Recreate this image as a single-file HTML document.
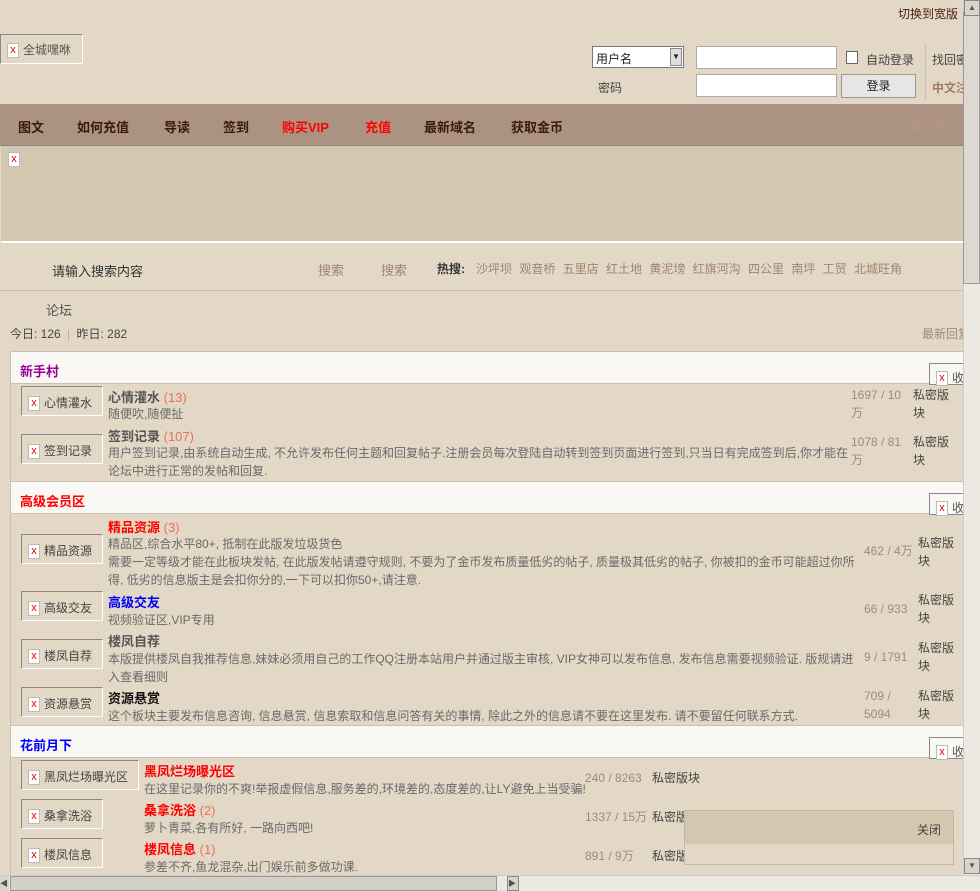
<!DOCTYPE html>
<html><head><meta charset="utf-8"><style>
*{margin:0;padding:0;box-sizing:border-box}
body{width:980px;height:891px;overflow:hidden;background:#e3d8c5;font-family:"Liberation Sans","Noto Sans CJK SC",sans-serif;font-size:12px;color:#555;position:relative}
.a{position:absolute;white-space:nowrap}
.x{display:inline-block;width:12px;height:15px;border:1px solid #bbb;background:#fff;color:#d00;font-size:11px;line-height:13px;text-align:center;vertical-align:middle;margin-right:4px}
.ib{position:absolute;height:30px;border:1px solid #888;border-right-color:#fff;border-bottom-color:#fff;padding:7px 0 0 6px;font-size:12px;color:#444;white-space:nowrap}
.sec{position:absolute;left:10px;width:955px;background:#faf8f4;border-top:1px solid #cbbfae;border-bottom:1px solid #cbbfae;height:33px}
.sec b{position:absolute;left:10px;top:9px;font-size:13px;font-weight:bold}
.t{font-size:13px;font-weight:bold}
.c{color:#e87060;font-weight:normal;font-size:13px}
.d{position:absolute;color:#6a6a6a;line-height:18px;white-space:normal}
.n{position:absolute;color:#a08a78;line-height:18px}
.p{position:absolute;color:#444;line-height:18px}
.nav{position:absolute;top:104px;left:0;width:980px;height:42px;background:#ab9281}
.nav span{position:absolute;top:13px;font-size:13px;font-weight:bold;color:#3a1a10}
.hot{color:#a08370}
</style></head><body>
<div class="a" style="right:22px;top:5px;color:#4a2010;font-size:12px">切换到宽版</div>
<div class="a" style="left:0;top:34px;width:83px;height:30px;border:1px solid #888;border-right-color:#fff;border-bottom-color:#fff;padding:6px 0 0 6px"><span class="x">x</span>全城嘿咻</div>
<div class="a" style="left:592px;top:46px;width:92px;height:22px;background:#fff;border:1px solid #777;padding:3px 3px;color:#222">用户名<span style="position:absolute;right:1px;top:1px;width:12px;height:18px;background:#ddd;border:1px solid #888;font-size:8px;text-align:center;line-height:16px">▼</span></div>
<div class="a" style="left:696px;top:46px;width:141px;height:23px;background:#fff;border:1px solid #aaa"></div>
<div class="a" style="left:846px;top:51px;width:12px;height:13px;background:#fff;border:1px solid #666"></div>
<div class="a" style="left:866px;top:51px;color:#444">自动登录</div>
<div class="a" style="left:925px;top:44px;height:56px;border-left:1px solid #cbbfae"></div>
<div class="a" style="left:932px;top:51px;color:#444">找回密</div>
<div class="a" style="left:598px;top:79px;color:#444">密码</div>
<div class="a" style="left:696px;top:74px;width:141px;height:23px;background:#fff;border:1px solid #aaa"></div>
<div class="a" style="left:841px;top:74px;width:75px;height:24px;background:#e6e6e4;border:1px solid #999;text-align:center;line-height:22px;color:#222">登录</div>
<div class="a" style="left:932px;top:79px;color:#a07a5a;font-weight:bold">中文注</div>
<div class="nav">
<span style="left:18px">图文</span><span style="left:77px">如何充值</span><span style="left:164px">导读</span><span style="left:223px">签到</span><span style="left:282px;color:#f00">购买VIP</span><span style="left:365px;color:#f00">充值</span><span style="left:424px">最新域名</span><span style="left:511px">获取金币</span><span style="left:898px;font-size:12px;color:#b39682">快捷导航</span>
</div>
<div class="a" style="left:1px;top:145px;width:963px;height:98px;background:#d4c7b0;border-top:1px solid #888;border-bottom:2px solid #fff;padding:6px 0 0 7px"><span class="x">x</span></div>
<div class="a" style="left:0;top:245px;width:964px;height:46px;border-bottom:1px solid #cbbfae"></div>
<div class="a" style="left:52px;top:261px;color:#333;font-size:13px">请输入搜索内容</div>
<div class="a hot" style="left:318px;top:260px;font-size:13px">搜索</div>
<div class="a hot" style="left:381px;top:260px;font-size:13px">搜索</div>
<div class="a" style="left:437px;top:260px;color:#333;font-weight:bold">热搜:</div>
<div class="a hot" style="left:476px;top:260px;word-spacing:4px">沙坪坝 观音桥 五里店 红土地 黄泥塝 红旗河沟 四公里 南坪 工贸 北城旺角</div>
<div class="a" style="left:46px;top:300px;font-size:13px;color:#555">论坛</div>
<div class="a" style="left:10px;top:325px;color:#444">今日: 126 <span style="color:#c9a98a;margin:0 3px">|</span> 昨日: 282</div>
<div class="a" style="left:922px;top:325px;color:#a08a78">最新回复</div>

<div class="sec" style="top:351px"><b style="color:#909">新手村</b></div>
<div class="a" style="left:929px;top:363px;width:36px;height:22px;border:1px solid #888;border-right:0;background:#faf8f4;padding:5px 0 0 6px"><span class="x">x</span>收</div>
<div class="ib" style="left:21px;top:386px;width:82px"><span class="x">x</span>心情灌水</div>
<div class="a t" style="left:108px;top:387px;color:#555">心情灌水 <span class="c">(13)</span></div>
<div class="d" style="left:108px;top:405px">随便吹,随便扯</div>
<div class="n" style="left:851px;top:386px">1697 / 10<br>万</div><div class="p" style="left:913px;top:386px">私密版<br>块</div>
<div class="ib" style="left:21px;top:434px;width:82px"><span class="x">x</span>签到记录</div>
<div class="a t" style="left:108px;top:426px;color:#555">签到记录 <span class="c">(107)</span></div>
<div class="d" style="left:108px;top:444px;width:745px">用户签到记录,由系统自动生成, 不允许发布任何主题和回复帖子.注册会员每次登陆自动转到签到页面进行签到,只当日有完成签到后,你才能在论坛中进行正常的发帖和回复.</div>
<div class="n" style="left:851px;top:433px">1078 / 81<br>万</div><div class="p" style="left:913px;top:433px">私密版<br>块</div>

<div class="sec" style="top:481px"><b style="color:#f00">高级会员区</b></div>
<div class="a" style="left:929px;top:493px;width:36px;height:22px;border:1px solid #888;border-right:0;background:#faf8f4;padding:5px 0 0 6px"><span class="x">x</span>收</div>
<div class="a t" style="left:108px;top:517px;color:#f00">精品资源 <span class="c">(3)</span></div>
<div class="ib" style="left:21px;top:534px;width:82px"><span class="x">x</span>精品资源</div>
<div class="d" style="left:108px;top:535px;width:750px">精品区,综合水平80+, 抵制在此版发垃圾货色<br>需要一定等级才能在此板块发帖, 在此版发帖请遵守规则, 不要为了金币发布质量低劣的帖子, 质量极其低劣的帖子, 你被扣的金币可能超过你所得, 低劣的信息版主是会扣你分的,一下可以扣你50+,请注意.</div>
<div class="n" style="left:864px;top:542px">462 / 4万</div><div class="p" style="left:918px;top:534px">私密版<br>块</div>
<div class="ib" style="left:21px;top:591px;width:82px"><span class="x">x</span>高级交友</div>
<div class="a t" style="left:108px;top:592px;color:#00f">高级交友</div>
<div class="d" style="left:108px;top:611px">视频验证区,VIP专用</div>
<div class="n" style="left:864px;top:600px">66 / 933</div><div class="p" style="left:918px;top:591px">私密版<br>块</div>
<div class="ib" style="left:21px;top:639px;width:82px"><span class="x">x</span>楼凤自荐</div>
<div class="a t" style="left:108px;top:631px;color:#555">楼凤自荐</div>
<div class="d" style="left:108px;top:650px;width:750px">本版提供楼凤自我推荐信息,妹妹必须用自己的工作QQ注册本站用户并通过版主审核, VIP女神可以发布信息, 发布信息需要视频验证. 版规请进入查看细则</div>
<div class="n" style="left:864px;top:648px">9 / 1791</div><div class="p" style="left:918px;top:639px">私密版<br>块</div>
<div class="ib" style="left:21px;top:687px;width:82px"><span class="x">x</span>资源悬赏</div>
<div class="a t" style="left:108px;top:688px;color:#111">资源悬赏</div>
<div class="d" style="left:108px;top:707px">这个板块主要发布信息咨询, 信息悬赏, 信息索取和信息问答有关的事情, 除此之外的信息请不要在这里发布. 请不要留任何联系方式.</div>
<div class="n" style="left:864px;top:687px">709 /<br>5094</div><div class="p" style="left:918px;top:687px">私密版<br>块</div>

<div class="sec" style="top:725px"><b style="color:#00f">花前月下</b></div>
<div class="a" style="left:929px;top:737px;width:36px;height:22px;border:1px solid #888;border-right:0;background:#faf8f4;padding:5px 0 0 6px"><span class="x">x</span>收</div>
<div class="ib" style="left:21px;top:760px;width:118px"><span class="x">x</span>黑凤烂场曝光区</div>
<div class="a t" style="left:144px;top:761px;color:#f00">黑凤烂场曝光区</div>
<div class="d" style="left:144px;top:780px">在这里记录你的不爽!举报虚假信息,服务差的,环境差的,态度差的,让LY避免上当受骗!</div>
<div class="n" style="left:585px;top:769px">240 / 8263</div><div class="p" style="left:652px;top:769px">私密版块</div>
<div class="ib" style="left:21px;top:799px;width:82px"><span class="x">x</span>桑拿洗浴</div>
<div class="a t" style="left:144px;top:800px;color:#f00">桑拿洗浴 <span class="c">(2)</span></div>
<div class="d" style="left:144px;top:819px">萝卜青菜,各有所好, 一路向西吧!</div>
<div class="n" style="left:585px;top:808px">1337 / 15万</div><div class="p" style="left:652px;top:808px">私密版</div>
<div class="ib" style="left:21px;top:838px;width:82px"><span class="x">x</span>楼凤信息</div>
<div class="a t" style="left:144px;top:839px;color:#f00">楼凤信息 <span class="c">(1)</span></div>
<div class="d" style="left:144px;top:858px">参差不齐,鱼龙混杂,出门娱乐前多做功课.</div>
<div class="n" style="left:585px;top:847px">891 / 9万</div><div class="p" style="left:652px;top:847px">私密版</div>
<div class="a" style="left:684px;top:810px;width:270px;height:55px;background:#e3d8c5;border:1px solid #bba;">
<div style="height:33px;background:#d4c7b0;text-align:right;padding:10px 12px 0 0;color:#444">关闭</div></div>
<div class="a" style="left:10px;top:351px;height:525px;border-left:1px solid #cbbfae"></div>

<div class="a" style="left:963px;top:0;width:17px;height:875px;background:#ece9e2;border-left:1px solid #ccc"></div>
<div class="a" style="left:963px;top:12px;width:17px;height:272px;background:#ddd9d0;border:1px solid #999"></div>
<div class="a" style="left:964px;top:0;width:16px;height:16px;background:#d8d4cc;border:1px solid #888;font-size:8px;text-align:center;line-height:14px">▲</div>
<div class="a" style="left:964px;top:858px;width:16px;height:16px;background:#d8d4cc;border:1px solid #888;font-size:8px;text-align:center;line-height:14px">▼</div>
<div class="a" style="left:0;top:875px;width:980px;height:16px;background:#ece9e2;border-top:1px solid #ccc"></div>
<div class="a" style="left:10px;top:876px;width:487px;height:15px;background:#d5d0c7;border:1px solid #999"></div>
<div class="a" style="left:0;top:876px;width:9px;height:15px;background:#d8d4cc;font-size:8px;line-height:15px">◀</div>
<div class="a" style="left:507px;top:876px;width:12px;height:15px;background:#d8d4cc;border:1px solid #888;font-size:8px;line-height:13px">▶</div>
</body></html>
